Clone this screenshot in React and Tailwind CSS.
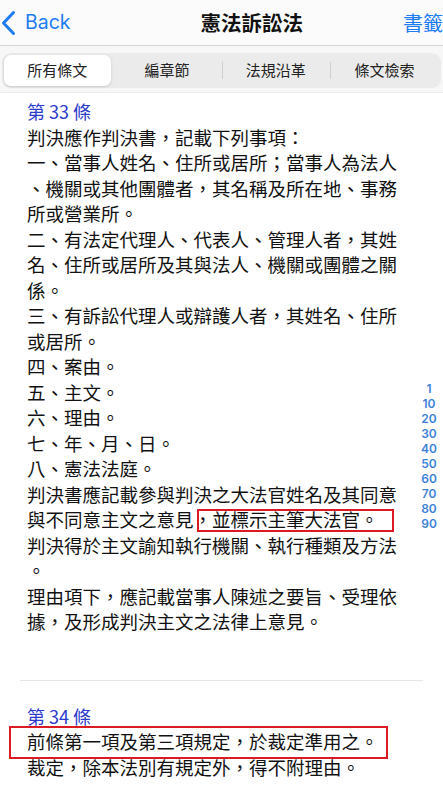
import React from "react";

const CJK = { fontFamily: '"Noto Sans CJK TC", "Noto Sans", sans-serif' };

const ART_33 = [
  "判決應作判決書，記載下列事項：",
  "一、當事人姓名、住所或居所；當事人為法人",
  "、機關或其他團體者，其名稱及所在地、事務",
  "所或營業所。",
  "二、有法定代理人、代表人、管理人者，其姓",
  "名、住所或居所及其與法人、機關或團體之關",
  "係。",
  "三、有訴訟代理人或辯護人者，其姓名、住所",
  "或居所。",
  "四、案由。",
  "五、主文。",
  "六、理由。",
  "七、年、月、日。",
  "八、憲法法庭。",
  "判決書應記載參與判決之大法官姓名及其同意",
  null, // highlighted line
  "判決得於主文諭知執行機關、執行種類及方法",
  "。",
  "理由項下，應記載當事人陳述之要旨、受理依",
  "據，及形成判決主文之法律上意見。",
];

const INDEX = ["1", "10", "20", "30", "40", "50", "60", "70", "80", "90"];
const TABS = ["所有條文", "編章節", "法規沿革", "條文檢索"];

function Line({ children, className = "" }) {
  return <div className={"h-[25.5px] leading-[25.5px] whitespace-nowrap " + className}>{children}</div>;
}

export default function App() {
  return (
    <div className="relative w-[443px] h-[799px] overflow-hidden bg-white" style={CJK}>
      {/* nav bar */}
      <div className="h-[46px] flex items-center border-b border-[#d4d4d4] bg-[#fbfbfb]">
        <div className="flex items-center text-[#1d7cf2]">
          <svg width="18" height="26" viewBox="0 0 18 26">
            <path d="M13.5 2.5 L3.5 13 L13.5 23.5" fill="none" stroke="currentColor" strokeWidth="3" strokeLinecap="round" strokeLinejoin="round" />
          </svg>
          <span className="ml-[7px] text-[19.5px]" style={{ fontFamily: "Inter, sans-serif" }}>Back</span>
        </div>
        <div className="flex-1 text-center text-[20.5px] font-bold text-[#111] pl-[30px]">憲法訴訟法</div>
        <div className="text-[20px] text-[#1d7cf2] whitespace-nowrap">書籤</div>
      </div>

      {/* segmented control */}
      <div className="h-[47px] bg-[#f7f7f7] border-b border-[#ececec] px-[2px] pt-[7px]">
        <div className="h-[35px] rounded-[9px] bg-[#ebebeb] flex items-center p-[2px]">
          {TABS.map((t, i) => (
            <div key={t} className="flex-1 h-full flex items-center relative">
              {i > 1 && <div className="absolute left-0 top-[7px] bottom-[7px] w-px bg-[#cfcfcf]" />}
              <div
                className={
                  "flex-1 h-full flex items-center justify-center text-[15px] text-[#222] rounded-[7px] " +
                  (i === 0 ? "bg-white shadow-[0_1px_3px_rgba(0,0,0,0.15)] mr-[2px]" : "")
                }
              >
                {t}
              </div>
            </div>
          ))}
        </div>
      </div>

      {/* content */}
      <div className="pl-[27px] pt-[6px] text-[18.5px] text-[#111]">
        <Line className="text-[#2b3acb] text-[18px]">第 33 條</Line>
        {ART_33.map((l, i) =>
          l === null ? (
            <Line key={i} className="relative">
              與不同意主文之意見，並標示主筆大法官。
              <span className="absolute left-[170px] top-[2px] w-[197px] h-[23px] border-[2.5px] border-[#dc1a22]" />
            </Line>
          ) : (
            <Line key={i}>{l}</Line>
          )
        )}

        <div className="h-px bg-[#e6e6e6] ml-[-7px] mr-[20px] mt-[45px] mb-[23px]" />

        <Line className="text-[#2b3acb] text-[18px]">第 34 條</Line>
        <Line className="relative">
          前條第一項及第三項規定，於裁定準用之。
          <span className="absolute left-[-18px] top-[-3px] w-[379px] h-[33px] border-[2.5px] border-[#dc1a22]" />
        </Line>
        <Line>裁定，除本法別有規定外，得不附理由。</Line>
      </div>

      {/* index rail */}
      <div className="absolute right-[3px] top-[381px] w-[22px] flex flex-col items-center text-[12px] font-semibold text-[#3c82d8]" style={{ fontFamily: "Inter, sans-serif" }}>
        {INDEX.map((n) => (
          <div key={n} className="h-[15px] leading-[15px]">{n}</div>
        ))}
      </div>
    </div>
  );
}
